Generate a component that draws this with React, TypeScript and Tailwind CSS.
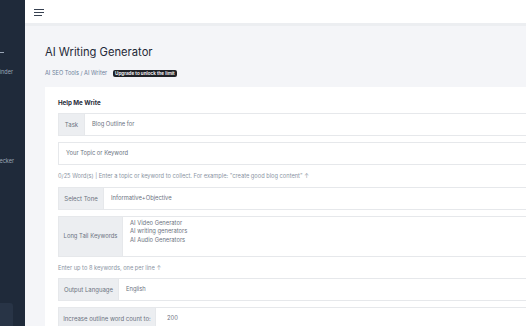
function Sidebar() {
  return (
    <aside className="w-[25px] shrink-0 bg-[#1f2a3a] overflow-hidden">
      <div className="w-[200px] -ml-[175px] text-right text-[5.5px] text-[#9aa6b6]">
        <div className="h-[48px]" />
        <div className="h-[8px] flex items-center justify-end pr-[21px]">
          <span className="block w-[4px] h-[1px] bg-[#9aa6b6]" />
        </div>
        <div className="h-[12px]" />
        <div className="h-[8px] leading-[8px] pr-[12px]">Keyword Finder</div>
        <div className="h-[81px]" />
        <div className="h-[8px] leading-[8px] pr-[11px]">Plagiarism Checker</div>
        <div className="h-[138px]" />
        <div className="h-[40px] mr-[12px] rounded-[3px] bg-[#283446]" />
      </div>
    </aside>
  );
}

function Row({ label, labelW, children }: { label: string; labelW: string; children: React.ReactNode }) {
  return (
    <div className="flex border border-[#e6e8eb] h-[23px]">
      <div className={`${labelW} shrink-0 bg-[#eceef1] flex items-center justify-center text-[6px] text-[#6b7280] border-r border-[#e6e8eb]`}>
        {label}
      </div>
      <div className="flex-1 bg-white flex items-center text-[5.8px] text-[#6b7280]">{children}</div>
    </div>
  );
}

export default function App() {
  return (
    <div className="w-[526px] h-[326px] overflow-hidden flex bg-[#f4f5f8]" style={{ fontFamily: "Inter, 'Noto Sans', sans-serif" }}>
      <Sidebar />
      <div className="flex-1 min-w-0 flex flex-col">
        {/* Header */}
        <header className="h-[26px] shrink-0 bg-white border-b-[3px] border-[#eceef1] flex items-center pl-[9px] pt-[2px]">
          <div className="flex flex-col gap-[2px]">
            <span className="block w-[10px] h-[1px] bg-[#374151]" />
            <span className="block w-[10px] h-[1px] bg-[#374151]" />
            <span className="block w-[8px] h-[1px] bg-[#374151]" />
          </div>
        </header>

        <main className="pl-[20px] pt-[20px]">
          <h1 className="text-[11.2px] leading-[12px] text-[#1f2937] font-normal">AI Writing Generator</h1>
          <div className="mt-[11px] flex items-center gap-[6px] text-[5.6px] leading-[8px]">
            <span className="text-[#6b7f99]">AI SEO Tools / AI Writer</span>
            <span className="bg-[#1f2227] text-white font-semibold rounded-[2px] px-[2px] text-[4.6px] leading-[7px]">Upgrade to unlock the limit</span>
          </div>

          <div className="mt-[10px] w-[600px] bg-white pl-[13px] pt-[12px] pb-[20px]">
            <h2 className="text-[6.2px] leading-[8px] font-bold text-[#1f2937]">Help Me Write</h2>
            <div className="mt-[6px] flex flex-col">
              <Row label="Task" labelW="w-[26px]">
                <span className="pl-[7px]">Blog Outline for</span>
              </Row>
              <div className="mt-[6px] h-[23px] border border-[#e6e8eb] flex items-center pl-[7px] text-[5.8px] text-[#6b7280]">
                Your Topic or Keyword
              </div>
              <p className="mt-[6px] h-[10px] text-[5.7px] leading-[10px] text-[#8a94a3]">
                0/25 Word(s) | Enter a topic or keyword to collect. For example: "create good blog content" ↑
              </p>
              <div className="mt-[6px]">
                <Row label="Select Tone" labelW="w-[45px]">
                  <span className="pl-[7px]">Informative+Objective</span>
                </Row>
              </div>
              <div className="mt-[6px] flex border border-[#e6e8eb] h-[41px]">
                <div className="w-[64px] shrink-0 bg-[#eceef1] flex items-center justify-center text-[5.85px] text-[#6b7280] border-r border-[#e6e8eb]">
                  Long Tail Keywords
                </div>
                <div className="flex-1 bg-white pl-[7px] pt-[2px] text-[5.8px] leading-[8.3px] text-[#6b7280]">
                  <div>AI Video Generator</div>
                  <div>AI writing generators</div>
                  <div>AI Audio Generators</div>
                </div>
              </div>
              <p className="mt-[6px] h-[10px] text-[5.7px] leading-[10px] text-[#8a94a3]">Enter up to 8 keywords, one per line ↑</p>
              <div className="mt-[5px]">
                <Row label="Output Language" labelW="w-[60px]">
                  <span className="pl-[7px]">English</span>
                </Row>
              </div>
              <div className="mt-[6px]">
                <Row label="Increase outline word count to:" labelW="w-[97px]">
                  <span className="pl-[11px]">200</span>
                </Row>
              </div>
            </div>
          </div>
        </main>
      </div>
    </div>
  );
}
